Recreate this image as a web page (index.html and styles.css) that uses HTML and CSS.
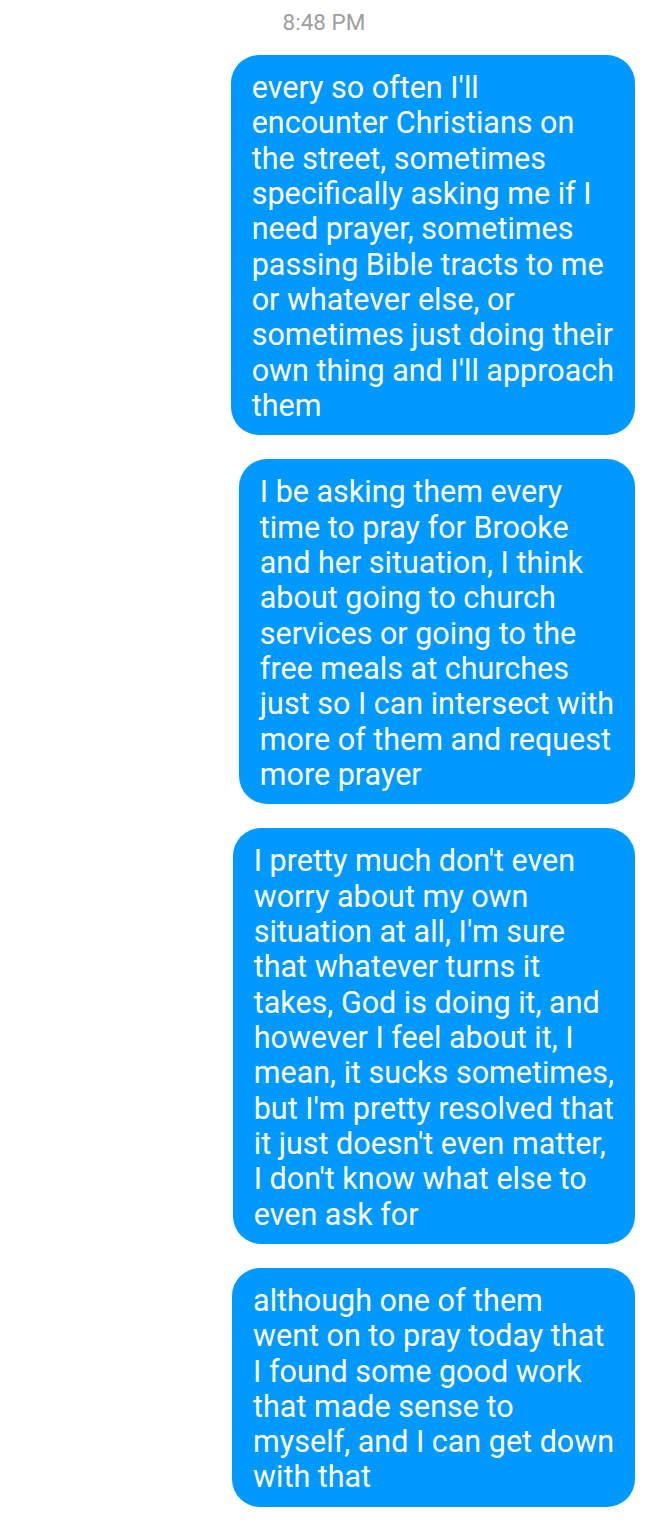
FILE: index.html
```html
<!DOCTYPE html>
<html>
<head>
<meta charset="utf-8">
<link rel="stylesheet" href="styles.css">
</head>
<body>
<div class="thread">
  <div class="time">8:48 PM</div>
  <div class="msg">every so often I'll<br>encounter Christians on<br>the street, sometimes<br>specifically asking me if I<br>need prayer, sometimes<br>passing Bible tracts to me<br>or whatever else, or<br>sometimes just doing their<br>own thing and I'll approach<br>them</div>
  <div class="msg">I be asking them every<br>time to pray for Brooke<br>and her situation, I think<br>about going to church<br>services or going to the<br>free meals at churches<br>just so I can intersect with<br>more of them and request<br>more prayer</div>
  <div class="msg">I pretty much don't even<br>worry about my own<br>situation at all, I'm sure<br>that whatever turns it<br>takes, God is doing it, and<br>however I feel about it, I<br>mean, it sucks sometimes,<br>but I'm pretty resolved that<br>it just doesn't even matter,<br>I don't know what else to<br>even ask for</div>
  <div class="msg">although one of them<br>went on to pray today that<br>I found some good work<br>that made sense to<br>myself, and I can get down<br>with that</div>
</div>
</body>
</html>
```
FILE: styles.css
```css
html, body {
  margin: 0;
  padding: 0;
  background: #ffffff;
}
.thread {
  display: flex;
  flex-direction: column;
  align-items: flex-end;
  padding: 11px 13px 0 0;
  gap: 24px;
  font-family: Roboto, "Noto Sans", sans-serif;
}
.time {
  align-self: stretch;
  text-align: center;
  color: #9e9e9e;
  font-size: 22.5px;
  line-height: 22px;
  margin: 0 -13px -2px 0;
}
.msg {
  background: #0099ff;
  color: #ffffff;
  font-size: 30.5px;
  line-height: 35.33px;
  padding: 15px 21px 12px 21px;
  border-radius: 28px;
  white-space: nowrap;
}
```
